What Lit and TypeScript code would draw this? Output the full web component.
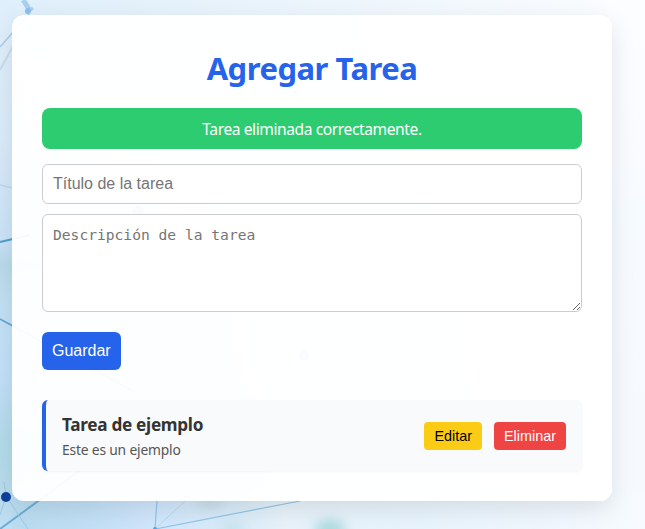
import { LitElement, html, css } from "lit";
import { customElement, property } from "lit/decorators.js";

@customElement("network-backdrop")
class NetworkBackdrop extends LitElement {
  static styles = css`
    :host { display: block; }
    svg { display: block; width: 100%; height: 100%; }
  `;
  render() {
    return html`
      <svg viewBox="0 0 645 529" preserveAspectRatio="none" fill="none">
        <defs>
          <linearGradient id="left" x1="0" y1="0" x2="0" y2="1">
            <stop offset="0" stop-color="#dfeffb" />
            <stop offset=".25" stop-color="#dbecfa" />
            <stop offset=".45" stop-color="#cbe3f8" />
            <stop offset=".5" stop-color="#b9dbec" />
            <stop offset=".58" stop-color="#c2e1f4" />
            <stop offset=".7" stop-color="#c3e0fa" />
            <stop offset=".84" stop-color="#b2dbea" />
            <stop offset="1" stop-color="#bfdef1" />
          </linearGradient>
          <linearGradient id="middle" x1="0" y1="0" x2="1" y2="0">
            <stop offset="0" stop-color="#f0f7fe" stop-opacity="0" />
            <stop offset=".5" stop-color="#f0f7fe" stop-opacity=".8" />
            <stop offset="1" stop-color="#f8fbff" />
          </linearGradient>
          <linearGradient id="top" x1="0" y1="0" x2="1" y2="0">
            <stop offset="0" stop-color="#e0effb" stop-opacity=".3" />
            <stop offset=".2" stop-color="#e4f1fb" />
            <stop offset=".6" stop-color="#eff7fd" />
            <stop offset="1" stop-color="#fcfdff" />
          </linearGradient>
          <linearGradient id="bottom" x1="0" y1="0" x2="1" y2="0">
            <stop offset="0" stop-color="#b9dcef" />
            <stop offset=".12" stop-color="#c1dff6" />
            <stop offset=".22" stop-color="#d0e6fc" />
            <stop offset=".36" stop-color="#daecf8" />
            <stop offset=".43" stop-color="#e7f2fb" />
            <stop offset=".65" stop-color="#e8f4fd" />
            <stop offset=".85" stop-color="#f0f7fe" />
            <stop offset="1" stop-color="#f7fbff" />
          </linearGradient>
          <linearGradient id="right" x1="0" y1="0" x2="0" y2="1">
            <stop offset="0" stop-color="#fcfdff" />
            <stop offset=".3" stop-color="#fafbff" />
            <stop offset=".45" stop-color="#f6fbff" />
            <stop offset="1" stop-color="#f6faff" />
          </linearGradient>
          <filter id="soft" x="-50%" y="-50%" width="200%" height="200%"><feGaussianBlur stdDeviation="6" /></filter>
          <filter id="slight" x="-30%" y="-30%" width="160%" height="160%"><feGaussianBlur stdDeviation=".7" /></filter>
        </defs>
        <rect width="645" height="529" fill="url(#left)" />
        <rect x="12" width="633" height="529" fill="url(#middle)" />
        <rect width="645" height="60" fill="url(#top)" />
        <rect x="12" y="490" width="633" height="39" fill="url(#bottom)" />
        <rect x="608" width="37" height="490" fill="url(#right)" />
        <g filter="url(#soft)">
          <ellipse cx="330" cy="529" rx="16" ry="9" fill="#a8dadd" />
          <ellipse cx="210" cy="502" rx="14" ry="6" fill="#c2dbe4" />
          <ellipse cx="232" cy="529" rx="12" ry="6" fill="#c2e3e9" />
        </g>
        <g filter="url(#slight)">
          <path d="M23 0q3 4 6 9" stroke="#a9d0f0" stroke-width="5" />
          <path d="m33 8-7 5" stroke="#a9d0f0" stroke-width="3" />
          <circle cx="28" cy="11" r="3" fill="#8ebfea" />
          <path d="M0 47 30 13" stroke="#a6cee9" stroke-width="1.4" />
          <path d="M0 70 30 15" stroke="#c6dcef" stroke-width="2" />
          <path d="M0 185 30 192" stroke="#b8d9f1" stroke-width="1.4" />
          <path d="M0 242 30 235" stroke="#4d9fce" stroke-width="2" />
          <path d="M0 319 135 392" stroke="#60a8d5" stroke-width="1.6" />
          <path d="M0 529 90 463" stroke="#69add9" stroke-width="2" />
          <path d="M0 515 6 496 4 482M6 496 28 529" stroke="#9acae0" stroke-width="1" />
          <path d="M157 501 155 529 300 501" stroke="#8fc5e8" stroke-width="1.2" />
          <path d="m155 529 30-28" stroke="#b9d7e9" stroke-width="1" />
          <circle cx="155" cy="529" r="2" fill="#4da8ee" />
          <circle cx="6" cy="497" r="5" fill="#10439c" />
          <circle cx="138" cy="212" r="6" fill="#8ab4ea" />
          <circle cx="304" cy="355" r="5" fill="#8ab4ea" />
        </g>
      </svg>
    `;
  }
}

@customElement("task-item")
class TaskItem extends LitElement {
  @property() heading = "";
  @property() detail = "";
  static styles = css`
    :host {
      display: flex; align-items: center; justify-content: space-between;
      box-sizing: border-box; height: 71px; padding: 0 16px;
      border-left: 4px solid #2563eb; border-radius: 6px;
      background: #f9fafb; box-shadow: 0 1px 3px rgba(0, 0, 0, 0.05);
    }
    h3 { margin: 2px 0 3px; font-size: 17.2px; line-height: 24px; color: #333; letter-spacing: -0.3px; }
    p { margin: 0; font-size: 13.8px; line-height: 20px; color: #555; letter-spacing: -0.17px; }
    .actions { display: flex; gap: 12px; }
    button {
      height: 28px; padding: 0 10px; border: 0; border-radius: 4px;
      font: 14.4px "Liberation Sans", Arial, sans-serif;
    }
    .edit { background: #facc15; color: #000; }
    .delete { background: #ef4444; color: #fff; }
  `;
  render() {
    return html`
      <div><h3>${this.heading}</h3><p>${this.detail}</p></div>
      <div class="actions">
        <button class="edit">Editar</button>
        <button class="delete">Eliminar</button>
      </div>
    `;
  }
}

@customElement("app-root")
class AppRoot extends LitElement {
  static styles = css`
    :host {
      display: block; position: relative; box-sizing: border-box;
      height: 529px; padding: 15px 33px 28px 12px; overflow: hidden;
      font-family: "Noto Sans", "Open Sans", sans-serif;
    }
    network-backdrop { position: absolute; inset: 0; }
    .card {
      position: relative; box-sizing: border-box; height: 486px; padding: 30px;
      display: flex; flex-direction: column;
      border-radius: 12px; background: rgba(255, 255, 255, 0.95);
      box-shadow: 0 8px 24px rgba(0, 0, 0, 0.1);
    }
    h1 { margin: 0 0 17px; font-size: 31px; line-height: 46px; text-align: center; color: #2563eb; letter-spacing: -0.5px; }
    .notice {
      box-sizing: border-box; height: 41px; margin-bottom: 15px; line-height: 42px;
      border-radius: 8px; background: #2ecc71; color: #fff; font-size: 15.6px;
      text-align: center; letter-spacing: -0.42px;
    }
    input, textarea {
      display: block; box-sizing: border-box; width: 100%; margin: 0 0 10px;
      padding: 10px; border: 1px solid #ccc; border-radius: 6px; background: #fff; outline: none;
    }
    input { height: 40px; font: 16px "Liberation Sans", Arial, sans-serif; }
    textarea { height: 98px; margin-bottom: 20px; font: 14.62px/20px "DejaVu Sans Mono", monospace; }
    ::placeholder { color: #757575; }
    .save {
      align-self: flex-start; height: 38px; margin-bottom: 30px; padding: 0 10px;
      border: 0; border-radius: 6px; background: #2563eb; color: #fff;
      font: 16px "Liberation Sans", Arial, sans-serif;
    }
  `;
  render() {
    return html`
      <network-backdrop></network-backdrop>
      <main class="card">
        <h1>Agregar Tarea</h1>
        <div class="notice">Tarea eliminada correctamente.</div>
        <input placeholder="Título de la tarea" />
        <textarea placeholder="Descripción de la tarea"></textarea>
        <button class="save">Guardar</button>
        <task-item heading="Tarea de ejemplo" detail="Este es un ejemplo"></task-item>
      </main>
    `;
  }
}
